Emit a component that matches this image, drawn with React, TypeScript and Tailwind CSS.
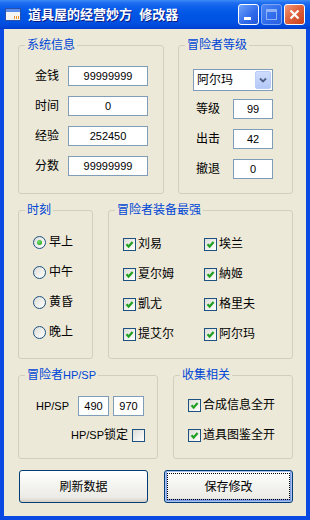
import type { ReactNode } from "react";
import clsx from "clsx";

function Group({
  title,
  className,
  children,
}: {
  title: ReactNode;
  className?: string;
  children?: ReactNode;
}) {
  return (
    <div className={clsx("rounded-[3px] border border-[#D0D0BF]", className)}>
      <div className="-mt-[8px] ml-[6px] w-fit bg-[#ECE9D8] px-[2px] text-[12px] leading-[14px] text-[#0046D5]">
        {title}
      </div>
      {children}
    </div>
  );
}

function TextBox({ value, className }: { value: string; className?: string }) {
  return (
    <div
      className={clsx(
        "flex h-[20px] items-center justify-center border border-[#7F9DB9] bg-white text-[11px] leading-none text-black",
        className
      )}
    >
      {value}
    </div>
  );
}

function CheckBox({ checked = true }: { checked?: boolean }) {
  return (
    <div className="flex h-[13px] w-[13px] shrink-0 items-center justify-center border border-[#1C5180] bg-[linear-gradient(135deg,#DCDCD7,#FFFFFF)]">
      {checked && (
        <svg width="9" height="9" viewBox="0 0 9 9">
          <path d="M1.5 4.2 L3.6 6.5 L7.6 2" fill="none" stroke="#21A121" strokeWidth="2.2" />
        </svg>
      )}
    </div>
  );
}

function Radio({ checked = false }: { checked?: boolean }) {
  return (
    <div className="flex h-[13px] w-[13px] shrink-0 items-center justify-center rounded-full border border-[#1C5180] bg-[linear-gradient(135deg,#DCDCD7,#FFFFFF)]">
      {checked && (
        <div className="h-[5px] w-[5px] rounded-full bg-[radial-gradient(circle_at_35%_35%,#72E06E,#119A11)]" />
      )}
    </div>
  );
}

function Check({ label }: { label: ReactNode }) {
  return (
    <div className="flex h-[20px] items-center gap-[2px]">
      <CheckBox />
      <span>{label}</span>
    </div>
  );
}

function XpButton({ label, focused }: { label: string; focused?: boolean }) {
  return (
    <button
      className={clsx(
        "h-[33px] w-[129px] rounded-[3px] border border-[#003C74] bg-[linear-gradient(to_bottom,#FFFFFF,#F4F4F0_45%,#ECEBE6_85%,#D6D0C5)] text-[12px] text-black",
        focused &&
          "shadow-[inset_0_0_0_1px_#A8C0F0,inset_0_-1px_0_2px_#7E9FE6] outline-1 -outline-offset-4 outline-black outline-dotted"
      )}
    >
      {label}
    </button>
  );
}

function AppIcon() {
  return (
    <svg width="16" height="13" viewBox="0 0 16 13">
      <rect x="0.5" y="0.5" width="15" height="12" fill="#F4F4F4" stroke="#2A4FA8" />
      <rect x="1" y="1" width="14" height="3" fill="#5A8EEA" />
      <rect x="9" y="8" width="1" height="3" fill="#F09020" />
      <rect x="11" y="8" width="1" height="3" fill="#F09020" />
      <rect x="13" y="8" width="1" height="3" fill="#F09020" />
    </svg>
  );
}

export default function App() {
  return (
    <div className="flex h-[520px] w-[310px] flex-col bg-[#0831D9] font-['Liberation_Sans','Noto_Sans_CJK_SC',sans-serif] text-[12px] text-black">
      {/* Title bar */}
      <div className="flex h-[29px] shrink-0 items-center bg-[linear-gradient(to_bottom,#3C8CF8_0px,#1E6CF0_3px,#0A5EEA_8px,#0055E5_15px,#0052E3_22px,#0046D8_27px,#003BC8_29px)] pl-[5px] pr-[5px]">
        <AppIcon />
        <span className="ml-[7px] whitespace-pre text-[13px] font-bold leading-none text-white [text-shadow:1px_1px_0_#0A1883]">
          道具屋的经营妙方  修改器
        </span>
        <div className="ml-auto flex gap-[2px]">
          <div className="relative h-[21px] w-[21px] rounded-[3px] border border-white bg-[linear-gradient(135deg,#6EA2F8,#2F6AEB_60%,#2558D8)]">
            <div className="absolute bottom-[4px] left-[5px] h-[3px] w-[7px] bg-white" />
          </div>
          <div className="flex h-[21px] w-[21px] items-center justify-center rounded-[3px] border border-[#7FA6F4] bg-[linear-gradient(135deg,#4A86F2,#2F6AEB_60%,#2A62E0)]">
            <div className="h-[11px] w-[11px] border border-t-[3px] border-[#8FB2F6]" />
          </div>
          <div className="flex h-[21px] w-[21px] items-center justify-center rounded-[3px] border border-white bg-[linear-gradient(135deg,#F09A7C,#E0643F_45%,#C8401C)]">
            <svg width="11" height="11" viewBox="0 0 11 11">
              <path d="M1.5 1.5 L9.5 9.5 M9.5 1.5 L1.5 9.5" stroke="white" strokeWidth="2.2" />
            </svg>
          </div>
        </div>
      </div>

      {/* Client area */}
      <div className="flex flex-1 flex-col border-x-[4px] border-b-[4px] border-[#0A4AE2] bg-[#ECE9D8] pl-[14px] pt-[16px]">
        {/* Row 1 */}
        <div className="flex h-[149px] gap-[14px]">
          <Group title="系统信息" className="w-[146px]">
            <div className="mt-[14px] flex flex-col gap-[10px] pl-[16px]">
              {[
                ["金钱", "99999999"],
                ["时间", "0"],
                ["经验", "252450"],
                ["分数", "99999999"],
              ].map(([label, value]) => (
                <div key={label} className="flex items-center">
                  <span className="w-[33px]">{label}</span>
                  <TextBox value={value} className="w-[80px]" />
                </div>
              ))}
            </div>
          </Group>
          <Group title="冒险者等级" className="w-[115px]">
            <div className="ml-[14px] mt-[17px] flex h-[22px] w-[80px] items-center border border-[#7F9DB9] bg-white p-[1px]">
              <span className="flex-1 pl-[2px] text-[12px]">阿尔玛</span>
              <div className="flex h-[18px] w-[16px] items-center justify-center rounded-[2px] border border-[#B9CCF5] bg-[linear-gradient(to_bottom,#CFDDFD,#B4C8F6)]">
                <svg width="8" height="6" viewBox="0 0 8 6">
                  <path d="M1 1.5 L4 4.5 L7 1.5" fill="none" stroke="#4D6185" strokeWidth="1.8" />
                </svg>
              </div>
            </div>
            <div className="mt-[8px] flex flex-col gap-[10px] pl-[17px]">
              {[
                ["等级", "99"],
                ["出击", "42"],
                ["撤退", "0"],
              ].map(([label, value]) => (
                <div key={label} className="flex items-center">
                  <span className="w-[37px]">{label}</span>
                  <TextBox value={value} className="w-[40px]" />
                </div>
              ))}
            </div>
          </Group>
        </div>

        {/* Row 2 */}
        <div className="mt-[16px] flex h-[149px] gap-[15px]">
          <Group title="时刻" className="w-[75px]">
            <div className="mt-[15px] flex flex-col gap-[10px] pl-[14px]">
              {["早上", "中午", "黄昏", "晚上"].map((t, i) => (
                <div key={t} className="flex h-[20px] items-center gap-[3px]">
                  <Radio checked={i === 0} />
                  <span>{t}</span>
                </div>
              ))}
            </div>
          </Group>
          <Group title="冒险者装备最强" className="w-[185px]">
            <div className="mt-[17px] grid grid-cols-[81px_1fr] gap-y-[10px] pl-[14px]">
              {["刘易", "埃兰", "夏尔姆", "納姬", "凱尤", "格里夫", "提艾尔", "阿尔玛"].map((n) => (
                <Check key={n} label={n} />
              ))}
            </div>
          </Group>
        </div>

        {/* Row 3 */}
        <div className="mt-[16px] flex h-[84px] gap-[15px]">
          <Group
            title={
              <>
                冒险者<span className="text-[11px]">HP/SP</span>
              </>
            }
            className="w-[140px]"
          >
            <div className="mt-[14px] flex items-center pl-[17px]">
              <span className="w-[42px] text-[11px]">HP/SP</span>
              <TextBox value="490" className="w-[31px]" />
              <TextBox value="970" className="ml-[4px] w-[31px]" />
            </div>
            <div className="mt-[9px] flex h-[20px] items-center justify-end gap-[4px] pr-[12px]">
              <span>
                <span className="text-[11px]">HP/SP</span>锁定
              </span>
              <CheckBox checked={false} />
            </div>
          </Group>
          <Group title="收集相关" className="w-[120px]">
            <div className="mt-[13px] flex flex-col gap-[10px] pl-[14px]">
              <Check label="合成信息全开" />
              <Check label="道具图鉴全开" />
            </div>
          </Group>
        </div>

        {/* Buttons */}
        <div className="ml-[1px] mt-[11px] flex gap-[16px]">
          <XpButton label="刷新数据" />
          <XpButton label="保存修改" focused />
        </div>
      </div>
    </div>
  );
}
